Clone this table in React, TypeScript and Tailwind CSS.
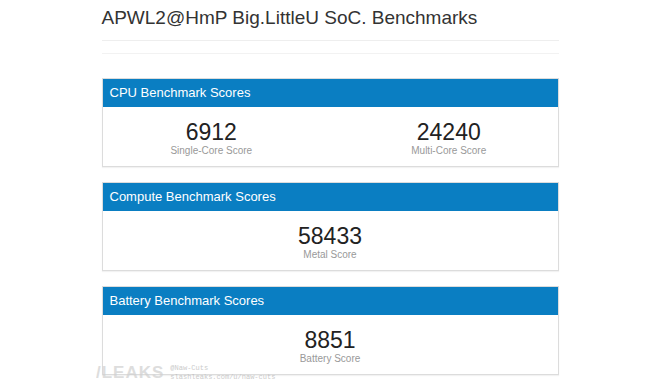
import React from 'react';

type Score = { value: string; label: string };

const sections: { title: string; scores: Score[] }[] = [
  {
    title: 'CPU Benchmark Scores',
    scores: [
      { value: '6912', label: 'Single-Core Score' },
      { value: '24240', label: 'Multi-Core Score' },
    ],
  },
  {
    title: 'Compute Benchmark Scores',
    scores: [{ value: '58433', label: 'Metal Score' }],
  },
  {
    title: 'Battery Benchmark Scores',
    scores: [{ value: '8851', label: 'Battery Score' }],
  },
];

export default function App() {
  return (
    <div
      className="relative h-[387px] w-[660px] overflow-hidden bg-white text-[#333]"
      style={{ fontFamily: '"Liberation Sans", Arial, sans-serif' }}
    >
      <div className="mx-auto w-[457px]">
        {/* Title */}
        <h1 className="pt-[6px] text-[19px] leading-[24px] text-[#333]">APWL2@HmP Big.LittleU SoC. Benchmarks</h1>
        <div className="mt-[10px] border-t border-[#eeeeee]" />
        <div className="mt-[12px] border-t border-[#f2f2f2]" />

        {/* Panels */}
        <div className="mt-[24px] flex flex-col gap-[15px]">
          {sections.map((s) => (
            <div key={s.title} className="border border-[#dcdcdc] bg-white shadow-[0_1px_1px_rgba(0,0,0,0.05)]">
              <div className="flex h-[28px] items-center bg-[#0a7ec2] pl-[7px] text-[13px] text-white">{s.title}</div>
              <div className="flex h-[59px] gap-[20px] pt-[12px]">
                {s.scores.map((sc) => (
                  <div key={sc.label} className="flex flex-1 flex-col items-center">
                    <div className="text-[23px] leading-[26px] text-[#222]">{sc.value}</div>
                    <div className="text-[10px] leading-[12px] text-[#999]">{sc.label}</div>
                  </div>
                ))}
              </div>
            </div>
          ))}
        </div>
      </div>

      {/* Watermark */}
      <div className="absolute left-[96px] top-[360px] flex items-center gap-[6px] opacity-70">
        <span className="text-[17px] font-bold tracking-[1px] text-[#d0d0d0]">/LEAKS</span>
        <div className="flex flex-col text-[7px] leading-[9px] text-[#b5b5b5]" style={{ fontFamily: '"Liberation Mono", monospace' }}>
          <span>@Naw-Cuts</span>
          <span>slashleaks.com/u/naw-cuts</span>
        </div>
      </div>
    </div>
  );
}
